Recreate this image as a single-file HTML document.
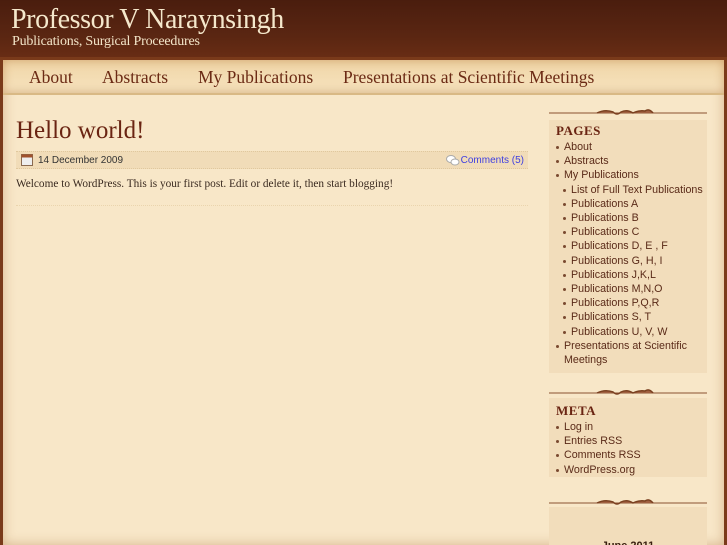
<!DOCTYPE html>
<html><head><style>
*{margin:0;padding:0;box-sizing:border-box}
html,body{width:727px;height:545px;overflow:hidden}
body{background:#3a170c;font-family:"Liberation Sans",sans-serif;position:relative}
#hdr{position:absolute;left:0;top:0;width:727px;height:60px;background:linear-gradient(#4a1d0e,#5a2612 60%,#6a2d14)}
#hdr h1{position:absolute;left:11px;top:4px;font:400 28px "Liberation Serif",serif;color:#f5e8cc;letter-spacing:-0.4px}
#hdr p{position:absolute;left:12px;top:34px;font:14px "Liberation Serif",serif;color:#f3e5c8;letter-spacing:-0.2px}
#wrap{position:absolute;left:0;top:57px;width:727px;height:488px;background:#f8e7c8;border:3px solid #7a3a1a;border-bottom:none;box-shadow:inset 0 0 12px rgba(150,80,30,.35);overflow:hidden}
#nav{position:absolute;left:0;top:0;width:721px;height:35px;background:linear-gradient(#f0d5a6,#f6e3bf);border-bottom:2px solid #d9b985;box-shadow:inset 0 0 10px rgba(160,90,30,.4)}
#nav span{position:absolute;top:7px;font:17.5px "Liberation Serif",serif;color:#6b2a14}
h2{position:absolute;left:13px;top:57px;font:400 25px "Liberation Serif",serif;color:#6a2412}
.meta{position:absolute;left:13px;top:91px;width:512px;height:18px;background:#f1dcb8;border-top:1px dotted #e0c89e;border-bottom:1px dotted #e0c89e;font-size:10px;color:#333}
.post{position:absolute;left:13px;top:118px;font:11.3px "Liberation Serif",serif;color:#3a2a20}
.hr{position:absolute;left:13px;top:145px;width:512px;border-top:1px dotted #ead4ad}
.side{position:absolute;left:546px;width:158px;background:#f2ddbb}
.side h3{font:bold 13px "Liberation Serif",serif;color:#6a2412;letter-spacing:.5px;margin:0 0 1px 7px}
.side ul{list-style:none;font-size:10.7px;color:#5a2a18;line-height:14.2px}
.side li{padding-left:15px;position:relative}
.side li:before{content:"";position:absolute;left:7px;top:6px;width:3px;height:3px;border-radius:50%;background:#7a4a30}
.side li.s{padding-left:22px}.side li.s:before{left:14px}
.orn{position:absolute;left:546px;width:158px;height:10px}
</style></head><body>
<div id="hdr"><h1>Professor V Naraynsingh</h1><p>Publications, Surgical Proceedures</p></div>
<div id="wrap">
<div id="nav"><span style="left:26px">About</span><span style="left:99px">Abstracts</span><span style="left:195px">My Publications</span><span style="left:340px">Presentations at Scientific Meetings</span></div>
<h2>Hello world!</h2>
<div class="meta"><svg style="position:absolute;left:5px;top:2px" width="12" height="12"><rect x=".5" y=".5" width="11" height="11" fill="#eee" stroke="#8a6a50"/><rect x=".5" y=".5" width="11" height="3" fill="#a0522d"/></svg><span style="position:absolute;left:22px;top:3px">14 December 2009</span><svg style="position:absolute;left:430px;top:3px" width="14" height="11"><ellipse cx="5" cy="4" rx="4.5" ry="3.5" fill="#fff" stroke="#aaa"/><ellipse cx="9" cy="7" rx="4" ry="3" fill="#fff" stroke="#aaa"/></svg><span style="position:absolute;right:4px;top:3px;color:#4040e0">Comments (5)</span></div>
<div class="post">Welcome to WordPress. This is your first post. Edit or delete it, then start blogging!</div>
<div class="hr"></div>
<svg class="orn" style="top:47px" viewBox="0 0 158 10"><line x1="0" y1="6" x2="158" y2="6" stroke="#8a5030"/><path d="M48 6 Q56 2 64 5 Q68 9 72 5 Q78 2 84 6 Q90 3 96 4 Q100 1 104 6" stroke="#7a4020" fill="#a06040" stroke-width="1.5"/></svg>
<div class="side" style="top:60px;height:253px;padding-top:3px"><h3>PAGES</h3><ul>
<li>About</li><li>Abstracts</li><li>My Publications</li><li class="s">List of Full Text Publications</li><li class="s">Publications A</li><li class="s">Publications B</li><li class="s">Publications C</li><li class="s">Publications D, E , F</li><li class="s">Publications G, H, I</li><li class="s">Publications J,K,L</li><li class="s">Publications M,N,O</li><li class="s">Publications P,Q,R</li><li class="s">Publications S, T</li><li class="s">Publications U, V, W</li><li>Presentations at Scientific Meetings</li></ul></div>
<svg class="orn" style="top:327px" viewBox="0 0 158 10"><line x1="0" y1="6" x2="158" y2="6" stroke="#8a5030"/><path d="M48 6 Q56 2 64 5 Q68 9 72 5 Q78 2 84 6 Q90 3 96 4 Q100 1 104 6" stroke="#7a4020" fill="#a06040" stroke-width="1.5"/></svg>
<div class="side" style="top:338px;height:79px;padding-top:5px"><h3>META</h3><ul><li>Log in</li><li>Entries RSS</li><li>Comments RSS</li><li>WordPress.org</li></ul></div>
<svg class="orn" style="top:437px" viewBox="0 0 158 10"><line x1="0" y1="6" x2="158" y2="6" stroke="#8a5030"/><path d="M48 6 Q56 2 64 5 Q68 9 72 5 Q78 2 84 6 Q90 3 96 4 Q100 1 104 6" stroke="#7a4020" fill="#a06040" stroke-width="1.5"/></svg>
<div class="side" style="top:447px;height:60px"><div style="position:absolute;top:33px;width:100%;text-align:center;font:bold 11px 'Liberation Sans',sans-serif;color:#3a2010">June 2011</div></div>
</div>
</body></html>
